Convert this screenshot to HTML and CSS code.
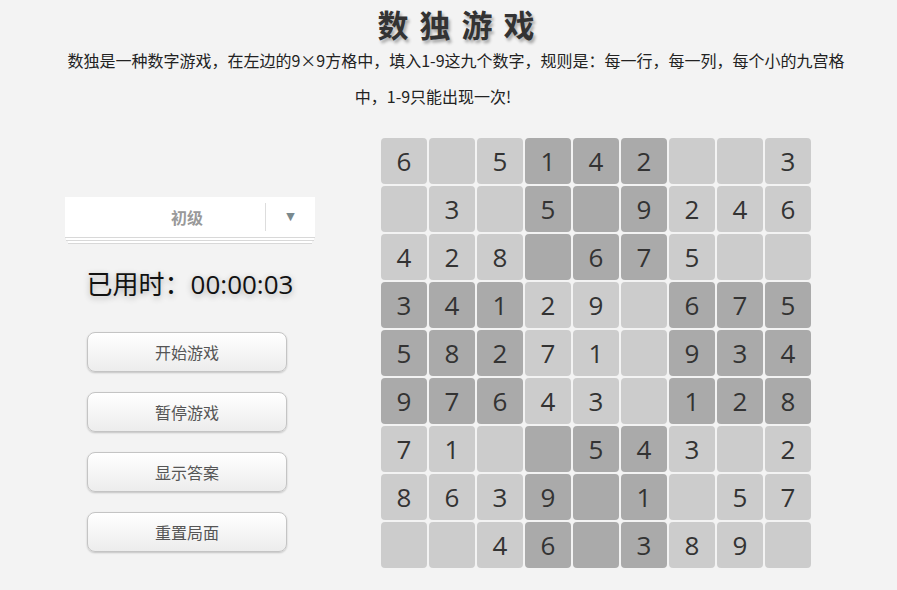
FILE: index.html
```html
<!DOCTYPE html>
<html lang="zh-CN">
  <head>
    <meta charset="UTF-8" />
    <meta name="viewport" content="width=device-width, initial-scale=1.0" />
    <title>数独游戏</title>
    <link rel="stylesheet" href="styles.css">
  </head>
  <body>
    <div class="header">
      <h1 class="title">数独游戏</h1>
      <p class="desc">数独是一种数字游戏，在左边的9×9方格中，填入1-9这九个数字，规则是：每一行，每一列，每个小的九宫格中，1-9只能出现一次!</p>
    </div>
    <div class="main">
      <div class="panel">
        <div class="select">
          <span class="selectText">初级</span>
          <span class="selectArrow">▼</span>
        </div>
        <p id="timer">已用时：00:00:03</p>
        <button class="btn">开始游戏</button>
        <button class="btn">暂停游戏</button>
        <button class="btn">显示答案</button>
        <button class="btn">重置局面</button>
      </div>
      <div id="board"></div>
    </div>

    <script>
      const board = document.getElementById("board");
      // 0 = empty cell
      const puzzle = [
        "605142003",
        "030509246",
        "428067500",
        "341290675",
        "582710934",
        "976430128",
        "710054302",
        "863901057",
        "004603890",
      ];

      for (let r = 0; r < 9; r++) {
        for (let c = 0; c < 9; c++) {
          const cell = document.createElement("span");
          cell.className = "cell";
          // checker pattern of the 3x3 blocks
          if ((Math.floor(r / 3) + Math.floor(c / 3)) % 2 === 1) {
            cell.classList.add("dark");
          }
          const n = puzzle[r][c];
          if (n !== "0") cell.textContent = n;
          board.appendChild(cell);
        }
      }
    </script>
  </body>
</html>
```

FILE: styles.css
```css
body {
  margin: 0;
  background-color: #f3f3f3;
  font-family: "Open Sans", "Noto Sans CJK SC", sans-serif;
}
.header {
  width: 828px;
  margin-left: 19px;
  text-align: center;
  text-indent: 46px;
}
.title {
  margin: 6px 0 0;
  font-size: 31px;
  line-height: 36px;
  letter-spacing: 11px;
  padding-left: 11px;
  font-weight: 700;
  color: #333;
  font-family: "Noto Sans CJK SC", sans-serif;
  text-shadow: 2px 3px 3px rgba(0, 0, 0, 0.3);
}
.desc {
  margin: 0;
  font-size: 16px;
  line-height: 36px;
  color: #222;
  font-family: "Noto Sans CJK SC", sans-serif;
}
.main {
  display: flex;
  margin-top: 24px;
}
.panel {
  width: 250px;
  margin-left: 65px;
  padding-top: 59px;
  display: flex;
  flex-direction: column;
  align-items: center;
}
.select {
  position: relative;
  width: 250px;
  height: 40px;
  background: #fff;
  display: flex;
  align-items: center;
  box-shadow: 0 1px 0 #d8d8d8, 0 4px 0 -1px #fff, 0 5px 0 -1px #d8d8d8,
    0 9px 0 -3px #fff, 0 10px 0 -3px #d8d8d8;
}
.selectText {
  flex: 1;
  padding-right: 6px;
  text-align: center;
  font-size: 16px;
  font-weight: 700;
  color: #999;
  font-family: "Noto Sans CJK SC", sans-serif;
}
.selectArrow {
  position: absolute;
  right: 0;
  top: 6px;
  width: 49px;
  height: 28px;
  line-height: 28px;
  border-left: 1px solid #ddd;
  text-align: center;
  font-size: 11px;
  color: #7a898e;
  font-family: "DejaVu Sans", sans-serif;
}
#timer {
  margin: 29px 0 30px;
  font-size: 26px;
  line-height: 36px;
  color: #111;
  font-family: "Open Sans", "Noto Sans CJK SC", sans-serif;
  text-shadow: 0 2px 6px rgba(0, 0, 0, 0.3);
}
.btn {
  width: 200px;
  height: 40px;
  margin-bottom: 20px;
  margin-left: -6px;
  border: 1px solid #c4c4c4;
  border-radius: 8px;
  background: linear-gradient(#ffffff, #ececec);
  box-shadow: 0 1px 2px rgba(0, 0, 0, 0.2);
  font-size: 16px;
  color: #555;
  font-family: "Noto Sans CJK SC", sans-serif;
}
#board {
  margin-left: 66px;
  display: grid;
  grid-template-columns: repeat(9, 46px);
  grid-auto-rows: 46px;
  gap: 2px;
}
.cell {
  background-color: #cccccc;
  border-radius: 4px;
  display: flex;
  align-items: center;
  justify-content: center;
  font-size: 26px;
  color: #333;
}
.dark {
  background-color: #aaaaaa;
}
```
